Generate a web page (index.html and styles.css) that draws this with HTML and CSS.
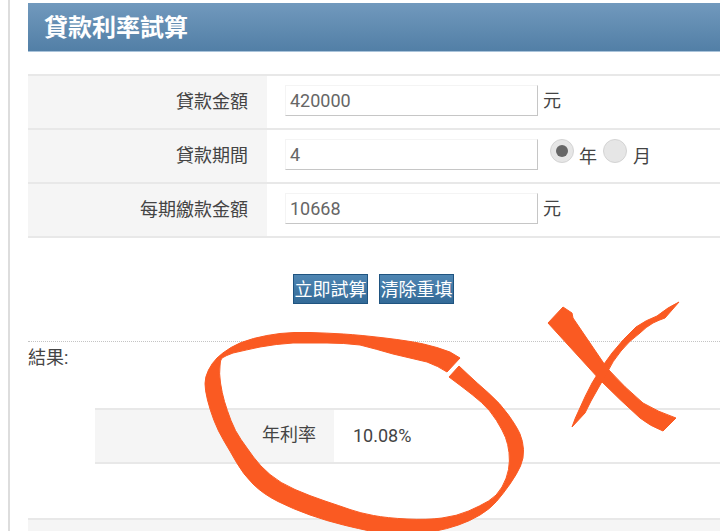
FILE: index.html
```html
<!DOCTYPE html>
<html lang="zh-Hant">
<head>
<meta charset="utf-8">
<title>貸款利率試算</title>
<link rel="stylesheet" href="styles.css">
</head>
<body>
<div class="page">
  <h1 class="title">貸款利率試算</h1>
  <div class="form">
    <div class="row">
      <div class="label">貸款金額</div>
      <div class="field"><div class="input">420000</div><span class="unit">元</span></div>
    </div>
    <div class="row">
      <div class="label">貸款期間</div>
      <div class="field">
        <div class="input">4</div>
        <span class="radio on"></span><span class="radio-text">年</span>
        <span class="radio"></span><span class="radio-text">月</span>
      </div>
    </div>
    <div class="row last">
      <div class="label">每期繳款金額</div>
      <div class="field"><div class="input">10668</div><span class="unit">元</span></div>
    </div>
  </div>
  <div class="actions">
    <button class="btn" type="button">立即試算</button>
    <button class="btn" type="button">清除重填</button>
  </div>
  <div class="result-title">結果:</div>
  <div class="result">
    <div class="result-label">年利率</div>
    <div class="result-value">10.08%</div>
  </div>
  <div class="next"></div>
</div>
<svg class="marks" viewBox="0 0 720 531" aria-hidden="true">
  <path class="ink" d="M460 358 L450 352 Q437 347 423.5 344 Q410 341 385 338 Q360 335 343.5 334 Q327 333 310 332.5 Q293 332 280 333.5 Q267 335 253.5 338.5 Q240 342 231 347.5 Q222 353 217 358 Q212 363 208.5 370 Q205 377 205 383.5 Q205 390 207.5 400 Q210 410 214 420.5 Q218 431 224 441 Q230 451 236.5 462.5 Q243 474 253 484 Q263 494 278 501.5 Q293 509 310 515 Q327 521 343.5 525 Q360 529 370 531 Q380 533 400 533.5 Q420 534 433.5 531.5 Q447 529 458.5 525 Q470 521 480 515 Q490 509 496.5 501.5 Q503 494 510 484 Q517 474 520.5 466 Q524 458 523.5 449.5 Q523 441 520 434 Q517 427 508.5 415 Q500 403 488.5 393 Q477 383 468 374.5 L459 366 L449 377 L461 386 Q473 395 481.5 402.5 Q490 410 496.5 420.5 Q503 431 505.5 437.5 Q508 444 509 452.5 Q510 461 508.5 469.5 Q507 478 502 487 Q497 496 488.5 501 Q480 506 468.5 511 Q457 516 442 518 Q427 520 407 519 Q387 518 373.5 515.5 Q360 513 350 509.5 Q340 506 325 501 Q310 496 295 489.5 Q280 483 270 474.5 Q260 466 253.5 457 Q247 448 241 439.5 Q235 431 231 420.5 Q227 410 224.5 401.5 Q222 393 220.5 383 Q219 373 220 366 Q220 360 222 358 Q226 355.5 233 353 Q246 350 260 347 Q276 344 293 343 L327 343 Q344 343 360 345 Q376 349 393 354 L427 362 Q438 366 447 372 Z"/>
  <path class="ink" d="M563 307 L572 313 L573 318 L607 368 Q625 388 643 403 Q658 412 676 418 L663 431 Q650 426 640 418 Q620 400 600 380 L548 323 Z"/>
  <path class="ink" d="M679 302 L665 318 Q659 320 653 323 Q646 327 640 333 Q629 341 621 351 Q612 362 608 371 L591 401 L585 413 L572 427 Q575 418 579 410 Q585 396 592 383 Q601 367 612 353 Q623 339 636 327 Q646 320 657 316 Q668 307 679 302 Z"/>
</svg>
</body>
</html>
```
FILE: styles.css
```css
* { box-sizing: border-box; }
html, body { margin: 0; padding: 0; background: #fff; }
body {
  width: 720px;
  height: 531px;
  overflow: hidden;
  position: relative;
  font-family: Roboto, "Noto Sans CJK TC", sans-serif;
  font-size: 18px;
  color: #444;
}
.page {
  margin-left: 8px;
  height: 531px;
  border-left: 2px solid #ddd;
  padding: 3px 0 0 18px;
}
.title {
  margin: 0 0 22px;
  height: 49px;
  padding-left: 16px;
  font-size: 24px;
  line-height: 51px;
  font-weight: 700;
  color: #fff;
  background: linear-gradient(#7199bd, #527fa6);
  border-bottom: 1px solid #a9c3da;
}
.form { border-top: 2px solid #e8e8e8; }
.row {
  display: flex;
  height: 54px;
  border-bottom: 2px solid #e8e8e8;
}
.label {
  width: 239px;
  padding-right: 19px;
  background: #f5f5f5;
  text-align: right;
  line-height: 52px;
}
.field {
  display: flex;
  align-items: center;
  padding: 0 0 3px 18px;
  flex: 1;
}
.input {
  width: 253px;
  height: 31px;
  padding-left: 4px;
  line-height: 30px;
  color: #666;
  border: 1px solid #f4f4f4;
  border-right-color: #c6c6c6;
  border-bottom-color: #c6c6c6;
}
.unit { margin: 0 0 3px 5px; }
.radio {
  width: 24px;
  height: 24px;
  margin: -7px 0 0 0;
  border-radius: 50%;
  background: #e6e6e6;
  border: 1px solid #d4d4d4;
  position: relative;
  flex: none;
}
.input + .radio { margin-left: 12px; }
.radio.on::after {
  content: "";
  position: absolute;
  left: 5px;
  top: 5px;
  width: 12px;
  height: 12px;
  border-radius: 50%;
  background: #666;
}
.radio-text { margin: 0 6px 0 5px; }
.radio-text:last-child { margin-left: 6px; }
.actions {
  display: flex;
  gap: 11px;
  padding: 36px 0 0 265px;
  height: 104px;
  border-bottom: 1px dotted #c4c4c4;
}
.btn {
  width: 75px;
  height: 30px;
  padding: 2px 0 0;
  font: inherit;
  line-height: 26px;
  color: #fff;
  background: linear-gradient(#4f86b3, #336a97);
  border: 1px solid #1f5480;
  border-radius: 0;
}
.result-title {
  height: 66px;
  padding-top: 3px;
  line-height: 26px;
}
.result {
  display: flex;
  margin-left: 67px;
  height: 56px;
  border-top: 2px solid #e8e8e8;
  border-bottom: 2px solid #e8e8e8;
}
.result-label {
  width: 239px;
  padding-right: 18px;
  background: #f5f5f5;
  text-align: right;
  line-height: 50px;
}
.result-value {
  padding-left: 19px;
  line-height: 52px;
}
.next {
  margin-top: 54px;
  height: 20px;
  border-top: 2px solid #e8e8e8;
  background: #f5f5f5;
}
.marks {
  position: absolute;
  left: 0;
  top: 0;
  width: 720px;
  height: 531px;
  pointer-events: none;
}
.ink {
  fill: #fa5a22;
  stroke: #fa5a22;
  stroke-width: 1;
  stroke-linejoin: round;
}
```
